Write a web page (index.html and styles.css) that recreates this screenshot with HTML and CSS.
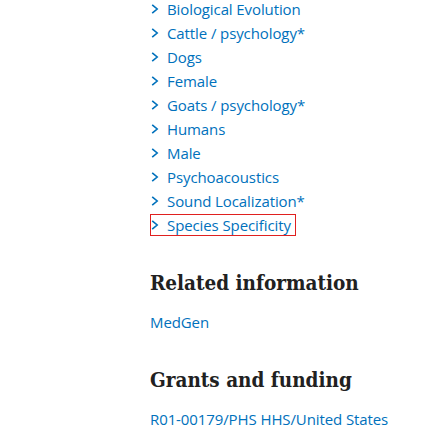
FILE: index.html
```html
<!DOCTYPE html>
<html>
<head>
<meta charset="utf-8">
<link rel="stylesheet" href="styles.css">
</head>
<body>
<div class="page">
  <ul class="terms">
    <li><a href="#"><svg class="chev" viewBox="0 0 8 12"><path d="M1.2 1.8 L6.2 6 L1.2 10.2"/></svg>Biological Evolution</a></li>
    <li><a href="#"><svg class="chev" viewBox="0 0 8 12"><path d="M1.2 1.8 L6.2 6 L1.2 10.2"/></svg>Cattle / psychology*</a></li>
    <li><a href="#"><svg class="chev" viewBox="0 0 8 12"><path d="M1.2 1.8 L6.2 6 L1.2 10.2"/></svg>Dogs</a></li>
    <li><a href="#"><svg class="chev" viewBox="0 0 8 12"><path d="M1.2 1.8 L6.2 6 L1.2 10.2"/></svg>Female</a></li>
    <li><a href="#"><svg class="chev" viewBox="0 0 8 12"><path d="M1.2 1.8 L6.2 6 L1.2 10.2"/></svg>Goats / psychology*</a></li>
    <li><a href="#"><svg class="chev" viewBox="0 0 8 12"><path d="M1.2 1.8 L6.2 6 L1.2 10.2"/></svg>Humans</a></li>
    <li><a href="#"><svg class="chev" viewBox="0 0 8 12"><path d="M1.2 1.8 L6.2 6 L1.2 10.2"/></svg>Male</a></li>
    <li><a href="#"><svg class="chev" viewBox="0 0 8 12"><path d="M1.2 1.8 L6.2 6 L1.2 10.2"/></svg>Psychoacoustics</a></li>
    <li><a href="#"><svg class="chev" viewBox="0 0 8 12"><path d="M1.2 1.8 L6.2 6 L1.2 10.2"/></svg>Sound Localization*</a></li>
    <li><a href="#" class="focused"><svg class="chev" viewBox="0 0 8 12"><path d="M1.2 1.8 L6.2 6 L1.2 10.2"/></svg>Species Specificity</a></li>
  </ul>
  <h2 class="heading">Related information</h2>
  <a href="#" class="link">MedGen</a>
  <h2 class="heading">Grants and funding</h2>
  <a href="#" class="link">R01-00179/PHS HHS/United States</a>
</div>
</body>
</html>
```
FILE: styles.css
```css
html, body {
  margin: 0;
  padding: 0;
  background: #ffffff;
}
.page {
  padding-left: 150px;
  font-family: "Open Sans", "Noto Sans", sans-serif;
  font-size: 15px;
  letter-spacing: -0.1px;
  color: #212121;
}
.terms {
  list-style: none;
  margin: -3px 0 0 0;
  padding: 0;
}
.terms li {
  line-height: 24px;
  height: 24px;
}
.terms a {
  color: #0071bc;
  text-decoration: none;
  display: inline-flex;
  align-items: center;
  height: 22px;
  padding-right: 4px;
  box-sizing: border-box;
  border: 1px solid transparent;
}
.terms a.focused {
  border-color: #e0201f;
}
.chev {
  width: 8px;
  height: 12px;
  margin: 0 8px 0 0;
  fill: none;
  stroke: #0071bc;
  stroke-width: 1.6;
}
.heading {
  font-family: "DejaVu Serif Condensed", "DejaVu Serif", serif;
  font-stretch: condensed;
  font-weight: bold;
  font-size: 20.5px;
  letter-spacing: 0;
  margin: 34px 0 15px 0;
  color: #212121;
}
.link {
  display: block;
  color: #0071bc;
  text-decoration: none;
  line-height: 24px;
}
```
